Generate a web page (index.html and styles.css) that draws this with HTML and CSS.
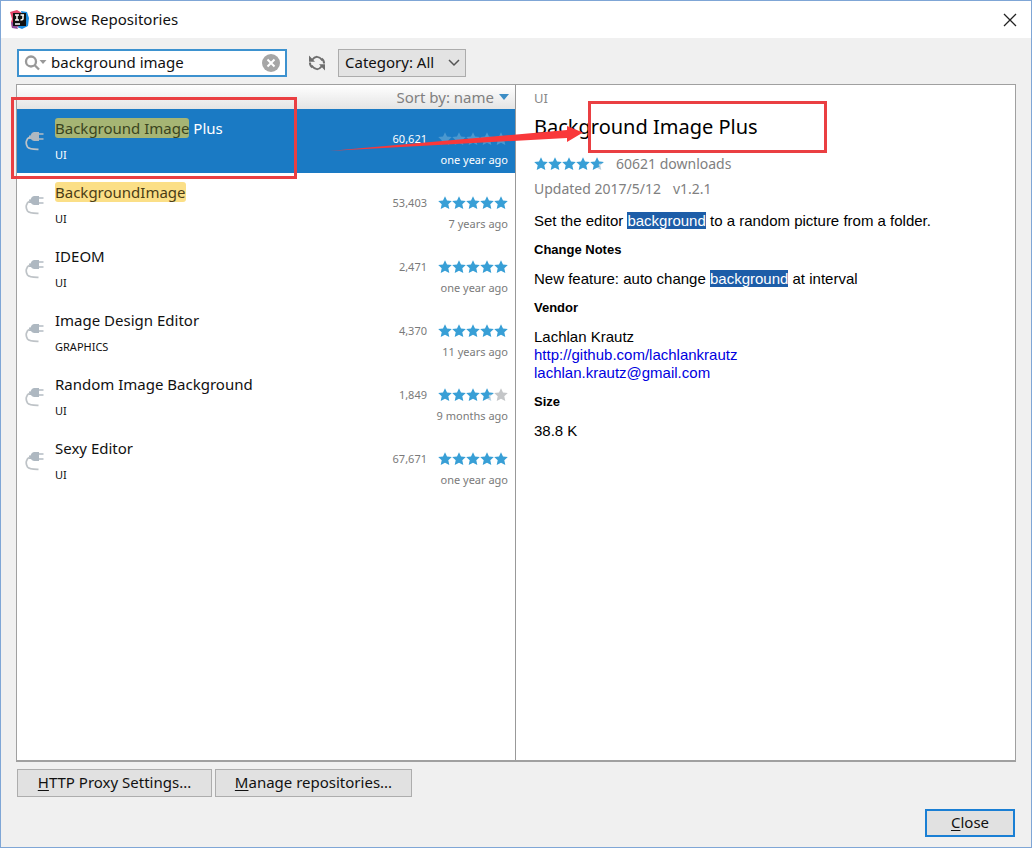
FILE: index.html
```html
<!DOCTYPE html>
<html lang="en">
<head>
<meta charset="utf-8">
<title>Browse Repositories</title>
<link rel="stylesheet" href="styles.css">
</head>
<body>
<svg class="defs" aria-hidden="true">
  <defs>
    <symbol id="star" viewBox="0 0 14 14"><path d="M7 .2l2 4.300 4.800.5-3.500 3.200 1 4.800L7 10.700l-4.300 2.300 1-4.800L.2 5l4.800-.5z"/></symbol>
    <symbol id="half" viewBox="0 0 14 14"><path fill="#b9d3e2" d="M7 .2l2 4.300 4.800.5-3.500 3.200 1 4.800L7 10.700z"/><path d="M7 .2l2 4.300 4.800.5-1.800 1.600-2.900.2L8.600 8.200l1 1.300L7 10.700l-4.300 2.300 1-4.800L.2 5l4.800-.5z"/></symbol>
    <symbol id="plug" viewBox="0 0 20 20"><path fill="#aeb8c1" d="M6.500 2.500Q7.500 1 9 1h5v9H9Q6.500 9.500 6 8H4V4.500h1.500z"/><path fill="none" stroke="#b4bcc3" stroke-width="1.300" d="M14 3h4.500M14 8h4.500"/><path fill="none" stroke="#bec3c7" stroke-width="1.700" d="M5 6C1 7.500.2 12.500 2.500 16c2 2.500 6 2.300 11 2.300"/></symbol>
    <symbol id="stars5" viewBox="0 0 70 14"><use href="#star" width="14" height="14"/><use href="#star" x="14" width="14" height="14"/><use href="#star" x="28" width="14" height="14"/><use href="#star" x="42" width="14" height="14"/><use href="#star" x="56" width="14" height="14"/></symbol>
    <symbol id="stars45" viewBox="0 0 70 14"><use href="#star" width="14" height="14"/><use href="#star" x="14" width="14" height="14"/><use href="#star" x="28" width="14" height="14"/><use href="#star" x="42" width="14" height="14"/><use href="#half" x="56" width="14" height="14"/></symbol>
    <symbol id="stars35" viewBox="0 0 70 14"><use href="#star" width="14" height="14"/><use href="#star" x="14" width="14" height="14"/><use href="#star" x="28" width="14" height="14"/><use href="#half" x="42" width="14" height="14"/><use href="#star" x="56" width="14" height="14" fill="#c4c6c8"/></symbol>
  </defs>
</svg>
<div class="window">
  <header class="titlebar">
    <svg class="logo" viewBox="0 0 20 20" aria-hidden="true">
      <path fill="#e4476a" d="M0 2l7-2 5 3-3 14-7 1-1-6 1-3z"/>
      <path fill="#8d4b9b" d="M1 12l4 1 3 6-6-1z"/>
      <path fill="#1c8be0" d="M11 1l6 1 2 6-1 8-6 3-5-2 7-4z"/>
      <path fill="#111" d="M3 3h13v13H3z"/>
      <path fill="none" stroke="#fff" stroke-width="1.500" d="M5 5h4M7 5v5M5 10h4M10.500 5h3.500M13 5v3.500Q13 10 10.500 10M5 14h5"/>
    </svg>
    <h1 class="title">Browse Repositories</h1>
    <button class="close-x" type="button" aria-label="Close window"><svg viewBox="0 0 14 14"><path d="M1 1l12 12M13 1L1 13"/></svg></button>
  </header>

  <div class="toolbar">
    <div class="search">
      <svg class="lens" viewBox="0 0 24 18" aria-hidden="true"><circle cx="7" cy="7.500" r="5"/><path class="handle" d="M10.500 11l4.500 4.500"/><path class="drop" d="M15.500 6h7L19 10z"/></svg>
      <input class="search-input" type="text" value="background image" aria-label="Search repositories">
      <button class="clear" type="button" aria-label="Clear search"><svg viewBox="0 0 18 18"><circle cx="9" cy="9" r="9"/><path d="M5.500 5.500l7 7M12.500 5.500l-7 7"/></svg></button>
    </div>
    <button class="refresh" type="button" aria-label="Refresh"><svg viewBox="0 0 18 18"><path class="arc" d="M4 6Q9-.5 14.500 6.500M14 12Q9 18.500 3.500 11.500"/><path class="arc" d="M1.900 8.500Q2 12 4.500 13.500M16.100 9.500Q16 6 13.500 4.500"/><path d="M1 1.500v6.300h6zM17 16.500v-6.300h-6z"/></svg></button>
    <div class="category">
      <select class="category-select" aria-label="Category"><option>Category: All</option></select>
      <svg class="chevron" viewBox="0 0 12 8" aria-hidden="true"><path d="M1 1l5 5 5-5"/></svg>
    </div>
  </div>

  <main class="panes">
    <section class="list-pane" aria-label="Plugins">
      <div class="list-head">
        <button class="sort" type="button">Sort by: name <svg viewBox="0 0 10 6" aria-hidden="true"><path d="M0 0h10L5 6z"/></svg></button>
      </div>
      <ul class="plugins">
        <li class="plugin selected">
          <svg class="plug"><use href="#plug"/></svg>
          <div class="info"><span class="name"><mark>Background Image</mark> Plus</span><span class="kind">UI</span></div>
          <div class="stats"><span class="count">60,621</span><svg class="stars"><use href="#stars5"/></svg><span class="age">one year ago</span></div>
        </li>
        <li class="plugin">
          <svg class="plug"><use href="#plug"/></svg>
          <div class="info"><span class="name"><mark>BackgroundImage</mark></span><span class="kind">UI</span></div>
          <div class="stats"><span class="count">53,403</span><svg class="stars"><use href="#stars5"/></svg><span class="age">7 years ago</span></div>
        </li>
        <li class="plugin">
          <svg class="plug"><use href="#plug"/></svg>
          <div class="info"><span class="name">IDEOM</span><span class="kind">UI</span></div>
          <div class="stats"><span class="count">2,471</span><svg class="stars"><use href="#stars5"/></svg><span class="age">one year ago</span></div>
        </li>
        <li class="plugin">
          <svg class="plug"><use href="#plug"/></svg>
          <div class="info"><span class="name">Image Design Editor</span><span class="kind">GRAPHICS</span></div>
          <div class="stats"><span class="count">4,370</span><svg class="stars"><use href="#stars5"/></svg><span class="age">11 years ago</span></div>
        </li>
        <li class="plugin">
          <svg class="plug"><use href="#plug"/></svg>
          <div class="info"><span class="name">Random Image Background</span><span class="kind">UI</span></div>
          <div class="stats"><span class="count">1,849</span><svg class="stars"><use href="#stars35"/></svg><span class="age">9 months ago</span></div>
        </li>
        <li class="plugin">
          <svg class="plug"><use href="#plug"/></svg>
          <div class="info"><span class="name">Sexy Editor</span><span class="kind">UI</span></div>
          <div class="stats"><span class="count">67,671</span><svg class="stars"><use href="#stars5"/></svg><span class="age">one year ago</span></div>
        </li>
      </ul>
    </section>

    <section class="detail-pane" aria-label="Plugin details">
      <div class="summary">
        <div class="detail-kind">UI</div>
        <h2 class="detail-name">Background Image Plus</h2>
        <div class="meta"><svg class="stars"><use href="#stars45"/></svg><span>60621 downloads</span></div>
        <div class="meta"><span>Updated 2017/5/12</span><span>v1.2.1</span></div>
      </div>
      <div class="description">
        <p>Set the editor <mark>background</mark> to a random picture from a folder.</p>
        <h3>Change Notes</h3>
        <p>New feature: auto change <mark>background</mark> at interval</p>
        <h3>Vendor</h3>
        <p>Lachlan Krautz<br><a href="http://github.com/lachlankrautz">http://github.com/lachlankrautz</a><br><a href="mailto:lachlan.krautz@gmail.com">lachlan.krautz@gmail.com</a></p>
        <h3>Size</h3>
        <p>38.8 K</p>
      </div>
    </section>
  </main>

  <div class="actions">
    <button class="btn proxy" type="button"><u>H</u>TTP Proxy Settings...</button>
    <button class="btn manage" type="button"><u>M</u>anage repositories...</button>
  </div>
  <footer class="footer">
    <button class="btn primary" type="button"><u>C</u>lose</button>
  </footer>

  <svg class="callouts" width="830" height="182" aria-hidden="true">
    <path class="frame" d="M12.500 98.500h283v79h-283zM589.500 102.500h236v49h-236z"/>
    <path class="arrow" d="M329 151L567 130v-4l16 6.500-16 9.500v-4z"/>
  </svg>
</div>
</body>
</html>
```

FILE: styles.css
```css
* { box-sizing: border-box; }
body { margin: 0; font-family: "Noto Sans", "Open Sans", sans-serif; font-size: 15px; color: #111; }
button, input, select { font: inherit; color: inherit; margin: 0; padding: 0; }
button { border: 0; background: none; }
.defs { position: absolute; width: 0; height: 0; }

.window {
  position: relative;
  display: flex;
  flex-direction: column;
  min-height: 100vh;
  background: #f0f0f0;
  border: 1px solid #7fa6d6;
}

.titlebar { display: flex; align-items: center; height: 37px; padding: 0 14px 0 9px; background: #fff; }
.logo { width: 20px; height: 20px; margin-right: 5px; }
.title { flex: 1; margin: 0; padding-bottom: 2px; font-size: 15px; font-weight: 400; }
.close-x { width: 14px; height: 14px; }
.close-x svg { display: block; fill: none; stroke: #222; stroke-width: 1.3; }

.toolbar { display: flex; align-items: center; padding: 11px 15px 7px 16px; }
.search { display: flex; align-items: center; width: 270px; height: 28px; padding: 0 5px; background: #fff; border: 2px solid #3d92cf; }
.lens { width: 24px; height: 18px; margin-right: 3px; }
.lens circle, .lens .handle { fill: none; stroke: #999; stroke-width: 2.3; }
.lens .drop { fill: #999; }
.search-input { flex: 1; min-width: 0; height: 24px; padding-bottom: 2px; border: 0; outline: 0; background: none; }
.clear { width: 18px; height: 18px; }
.clear svg { display: block; fill: #a6a6a6; }
.clear path { stroke: #fff; stroke-width: 2; }
.refresh { width: 18px; height: 18px; margin: 0 12px 0 21px; }
.refresh svg { display: block; fill: #6e6e6e; }
.refresh .arc { fill: none; stroke: #6e6e6e; stroke-width: 2; }
.category { position: relative; }
.category-select { appearance: none; display: block; width: 128px; height: 28px; padding: 0 0 2px 6px; border: 1px solid #acacac; border-radius: 0; background: #e3e3e3; }
.chevron { position: absolute; right: 6px; top: 10px; width: 12px; height: 8px; fill: none; stroke: #555; stroke-width: 1.5; pointer-events: none; }

.panes { display: grid; grid-template-columns: 1fr 1fr; flex: 1; margin: 0 15px; background: #fff; border: 1px solid #a0a0a0; border-bottom-width: 2px; }
.list-pane { min-width: 0; border-right: 1px solid #999; }
.detail-pane { min-width: 0; padding: 3px 18px; }
.list-head { display: flex; justify-content: flex-end; height: 24px; padding-right: 6px; background: linear-gradient(#fff, #e4e4e4); }
.sort { display: flex; align-items: center; gap: 5px; color: #808080; }
.sort svg { width: 10px; height: 6px; fill: #3c8dc5; }

.plugins { margin: 0; padding: 0; list-style: none; }
.plugin { display: flex; height: 64px; padding: 0 7px 0 8px; }
.plug { width: 20px; height: 20px; margin: 22px 10px 0 0; }
.info { display: flex; flex: 1; flex-direction: column; padding-top: 8px; }
.name { line-height: 22px; }
.name mark { border-radius: 3px; background: #fbdf87; color: #4b3d16; }
.kind { margin-top: 6px; font-size: 11px; line-height: 20px; }
.stats { display: grid; grid-template-columns: auto 70px; gap: 1px 11px; align-content: start; justify-content: end; padding-top: 20px; font-size: 11px; line-height: 20px; color: #7a7a7a; }
.stars { width: 70px; height: 14px; fill: #389fd6; }
.stats .stars { align-self: center; }
.count { text-align: right; }
.age { grid-column: 1 / 3; text-align: right; }
.selected { background: #1a7ac4; color: #fff; }
.selected .stats { color: #fff; }
.selected .stars { fill: #4a98d0; }
.selected .name mark { background: #a6b574; color: #3a4420; }

.detail-kind { font-size: 13px; line-height: 20px; color: #888; }
.detail-name { margin: 0 0 5px; font-size: 20px; font-weight: 400; line-height: 38px; color: #000; }
.meta { display: flex; align-items: center; gap: 12px; height: 25px; font-size: 14px; color: #808080; }
.description { font-family: "Liberation Sans", Arial, sans-serif; font-size: 15px; line-height: 18px; color: #000; }
.description p { margin: 0; padding: 11px 0; }
.description h3 { margin: 0; font-size: 13px; line-height: 18px; }
.description mark { background: #1d5da8; color: #fff; }
.description a { color: #0000e0; text-decoration: none; }

.actions { display: flex; gap: 3px; padding: 7px 16px 0; }
.btn { height: 28px; padding-bottom: 2px; border: 1px solid #adadad; background: #e1e1e1; }
.btn u { text-underline-offset: 2px; }
.proxy { width: 195px; }
.manage { width: 197px; }
.footer { display: flex; justify-content: flex-end; padding: 12px 16px 10px; }
.primary { width: 90px; border: 2px solid #1a7fd4; }

.callouts { position: absolute; left: -1px; top: -1px; pointer-events: none; }
.frame { fill: none; stroke: #ea3f42; stroke-width: 3; }
.arrow { fill: #f9383a; }
```
